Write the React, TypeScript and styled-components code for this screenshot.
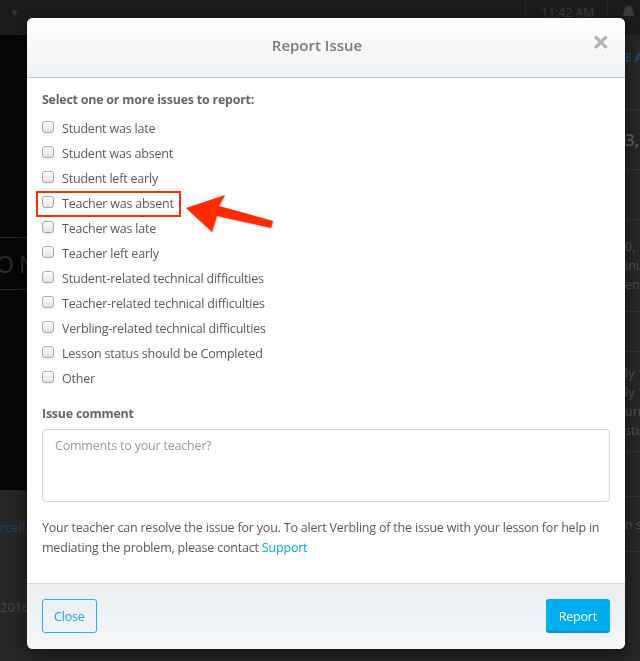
import React from "react";
import styled, { createGlobalStyle } from "styled-components";
import { Bell } from "lucide-react";

const GlobalStyle = createGlobalStyle`
  html, body { margin: 0; padding: 0; }
  body {
    width: 640px;
    height: 661px;
    overflow: hidden;
    background: #262626;
    font-family: "Open Sans", "Liberation Sans", sans-serif;
  }
  * { box-sizing: border-box; }
`;

/* ---------- background page ---------- */

const Page = styled.div`
  width: 640px;
  height: 661px;
  display: flex;
  flex-direction: column;
  overflow: hidden;
  background: #262626;
`;

const TopBar = styled.div`
  height: 35px;
  flex: none;
  background: #1c1c1c;
  display: flex;
  align-items: center;
  justify-content: space-between;
  padding: 0 0 10px 10px;
  color: #444;
  font-size: 13px;
`;

const Caret = styled.span`
  font-size: 9px;
  color: #3c3c3c;
`;

const TopRight = styled.div`
  display: flex;
  align-items: center;
  height: 25px;
  margin-right: -8px;
`;

const Clock = styled.div`
  height: 25px;
  display: flex;
  align-items: center;
  padding: 0 13px 0 15px;
  border-left: 1px solid #262626;
  border-right: 1px solid #262626;
  color: #3e3e3e;
  font-size: 12.5px;
  letter-spacing: -0.2px;
`;

const BellWrap = styled.div`
  width: 40px;
  display: flex;
  justify-content: center;
  color: #3c3c3c;
`;

const Main = styled.div`
  flex: 1;
  display: grid;
  grid-template-columns: 625px 1fr;
`;

const LeftCol = styled.div`
  display: flex;
  flex-direction: column;
`;

const Hero = styled.div`
  height: 455px;
  background: #060606;
  padding-top: 202px;
`;

const HeroTitle = styled.div`
  border-top: 1px solid #2a2a2a;
  border-bottom: 1px solid #2a2a2a;
  height: 53px;
  display: flex;
  align-items: center;
  font-size: 23px;
  letter-spacing: 5px;
  color: #2e2e2e;
  margin-left: -4px;
`;

const LeftLower = styled.div`
  padding-top: 28px;
  display: flex;
  flex-direction: column;
  gap: 62px;
  font-size: 13px;
`;

const DimLink = styled.div`
  color: #1e4461;
`;

const DimDate = styled.div`
  color: #4a4a4a;
`;

const RightCol = styled.div`
  display: flex;
  flex-direction: column;
  white-space: nowrap;
  overflow: hidden;
  font-size: 12.5px;
  color: #575757;
`;

const Block = styled.div<{ $h: number; $line?: boolean }>`
  height: ${(p) => p.$h}px;
  flex: none;
  border-bottom: ${(p) => (p.$line ? "1px solid #333" : "none")};
  display: flex;
  flex-direction: column;
  justify-content: center;
  line-height: 19px;
`;

const BlueBit = styled.div`
  color: #1d4c70;
  font-weight: 700;
  font-size: 12px;
`;

const BigBit = styled.div`
  font-size: 17px;
  font-weight: 600;
  color: #5e5e5e;
`;

/* ---------- modal ---------- */

const Overlay = styled.div`
  position: fixed;
  inset: 0;
  padding: 18px 0 0 27px;
`;

const Modal = styled.div`
  width: 598px;
  background: #fff;
  border-radius: 6px;
  overflow: hidden;
  box-shadow: 0 5px 18px rgba(0, 0, 0, 0.5);
`;

const Header = styled.div`
  height: 60px;
  padding: 0 16px 5px 15px;
  display: flex;
  align-items: center;
  background: linear-gradient(#ffffff, #eef1f4);
  border-bottom: 1px solid #c5cdd4;
`;

const Title = styled.h4`
  flex: 1;
  margin: 0;
  text-align: center;
  font-size: 15px;
  font-weight: 600;
  color: #7a7a7a;
`;

const CloseX = styled.button`
  width: 17px;
  margin-top: -9px;
  border: 0;
  background: none;
  padding: 0;
  font-family: "Open Sans", "Liberation Sans", sans-serif;
  font-size: 31px;
  font-weight: 700;
  line-height: 30px;
  color: #b3b3b3;
  text-shadow: 0 1px 0 #fff;
`;

const Body = styled.div`
  padding: 12px 15px 25px;
`;

const SectionLabel = styled.div<{ $mt?: number }>`
  margin-top: ${(p) => p.$mt ?? 0}px;
  font-size: 12.4px;
  letter-spacing: -0.2px;
  font-weight: 700;
  line-height: 20px;
  color: #666;
`;

const List = styled.div`
  margin-top: 6px;
  display: flex;
  flex-direction: column;
`;

const Row = styled.label`
  position: relative;
  height: 25px;
  display: flex;
  align-items: center;
  gap: 8px;
  font-size: 12.5px;
  letter-spacing: -0.2px;
  color: #5a5a5a;
`;

const Check = styled.input`
  appearance: none;
  margin: -4px 0 0 0;
  width: 12px;
  height: 12px;
  border: 1px solid #a9a9a9;
  border-radius: 3px;
  background: linear-gradient(#ffffff, #e4e4e4);
  box-shadow: 0 1px 0 rgba(0, 0, 0, 0.04);
`;

const Highlight = styled.span`
  position: absolute;
  left: -6px;
  top: 0;
  width: 145px;
  height: 26px;
  border: 2px solid #ff2b00;
  pointer-events: none;
`;

const Arrow = styled.svg`
  position: absolute;
  left: 142px;
  top: 1px;
  overflow: visible;
  filter: drop-shadow(1px 1px 1px rgba(0, 0, 0, 0.25));
`;

const TextArea = styled.textarea`
  display: block;
  margin-top: 5px;
  width: 100%;
  height: 73px;
  resize: none;
  border: 1px solid #d3d3d3;
  border-radius: 4px;
  padding: 6px 12px;
  font-family: "Open Sans", "Liberation Sans", sans-serif;
  font-size: 12.5px;
  letter-spacing: -0.2px;
  line-height: 20px;
  color: #555;
  &::placeholder {
    color: #9a9a9a;
  }
`;

const Note = styled.p`
  margin: 16px 0 0;
  font-size: 12.5px;
  letter-spacing: -0.2px;
  line-height: 20px;
  color: #595959;
`;

const Link = styled.a`
  color: #00a9ec;
  text-decoration: none;
`;

const Footer = styled.div`
  display: flex;
  justify-content: space-between;
  padding: 15px 15px 16px;
  border-top: 1px solid #d4dadf;
  background: linear-gradient(#ebeff2, #f4f6f8);
`;

const Button = styled.button<{ $primary?: boolean }>`
  height: 34px;
  padding: 0 ${(p) => (p.$primary ? 13 : 11)}px;
  border-radius: 3px;
  font-family: "Open Sans", "Liberation Sans", sans-serif;
  font-size: 12.5px;
  letter-spacing: -0.2px;
  cursor: pointer;
  ${(p) =>
    p.$primary
      ? `
    background: #00aeef;
    color: #fff;
    border: 0;
    border-bottom: 2px solid #0097d1;
    padding-top: 2px;
  `
      : `
    background: transparent;
    color: #12a9e8;
    border: 1px solid #23b2ee;
  `}
`;

const issues = [
  "Student was late",
  "Student was absent",
  "Student left early",
  "Teacher was absent",
  "Teacher was late",
  "Teacher left early",
  "Student-related technical difficulties",
  "Teacher-related technical difficulties",
  "Verbling-related technical difficulties",
  "Lesson status should be Completed",
  "Other",
];

export default function App() {
  return (
    <>
      <GlobalStyle />
      <Page>
        <TopBar>
          <Caret>▼</Caret>
          <TopRight>
            <Clock>11:42 AM</Clock>
            <BellWrap>
              <Bell size={15} fill="#3c3c3c" strokeWidth={1.5} />
            </BellWrap>
          </TopRight>
        </TopBar>
        <Main>
          <LeftCol>
            <Hero>
              <HeroTitle>ON</HeroTitle>
            </Hero>
            <LeftLower>
              <DimLink>rcella</DimLink>
              <DimDate>2016</DimDate>
            </LeftLower>
          </LeftCol>
          <RightCol>
            <Block $h={45}>
              <BlueBit>E AL</BlueBit>
            </Block>
            <Block $h={30} $line />
            <Block $h={60} $line>
              <BigBit>3, 2</BigBit>
            </Block>
            <Block $h={50} $line />
            <Block $h={92} $line>
              <div>0, 1</div>
              <div>inut</div>
              <div>ents</div>
            </Block>
            <Block $h={40} $line />
            <Block $h={100} $line>
              <div>ly 1</div>
              <div>ly 1</div>
              <div>urre</div>
              <div>stin</div>
            </Block>
            <Block $h={45} $line />
            <Block $h={55} $line>
              <div>n se</div>
            </Block>
          </RightCol>
        </Main>
      </Page>

      <Overlay>
        <Modal>
          <Header>
            <Title>Report Issue</Title>
            <CloseX aria-label="Close">×</CloseX>
          </Header>
          <Body>
            <SectionLabel>Select one or more issues to report:</SectionLabel>
            <List>
              {issues.map((t, i) => (
                <Row key={t}>
                  <Check type="checkbox" />
                  {t}
                  {i === 3 && (
                    <>
                      <Highlight />
                      <Arrow width="92" height="42" viewBox="0 0 92 42">
                        <path
                          d="M2 16 L41 3 L35 14 L89 29 L87 36 L33 24 L28 40 Z"
                          fill="#ff2b00"
                        />
                      </Arrow>
                    </>
                  )}
                </Row>
              ))}
            </List>
            <SectionLabel $mt={13}>Issue comment</SectionLabel>
            <TextArea placeholder="Comments to your teacher?" />
            <Note>
              Your teacher can resolve the issue for you. To alert Verbling of
              the issue with your lesson for help in mediating the problem,
              please contact <Link href="#">Support</Link>
            </Note>
          </Body>
          <Footer>
            <Button>Close</Button>
            <Button $primary>Report</Button>
          </Footer>
        </Modal>
      </Overlay>
    </>
  );
}
